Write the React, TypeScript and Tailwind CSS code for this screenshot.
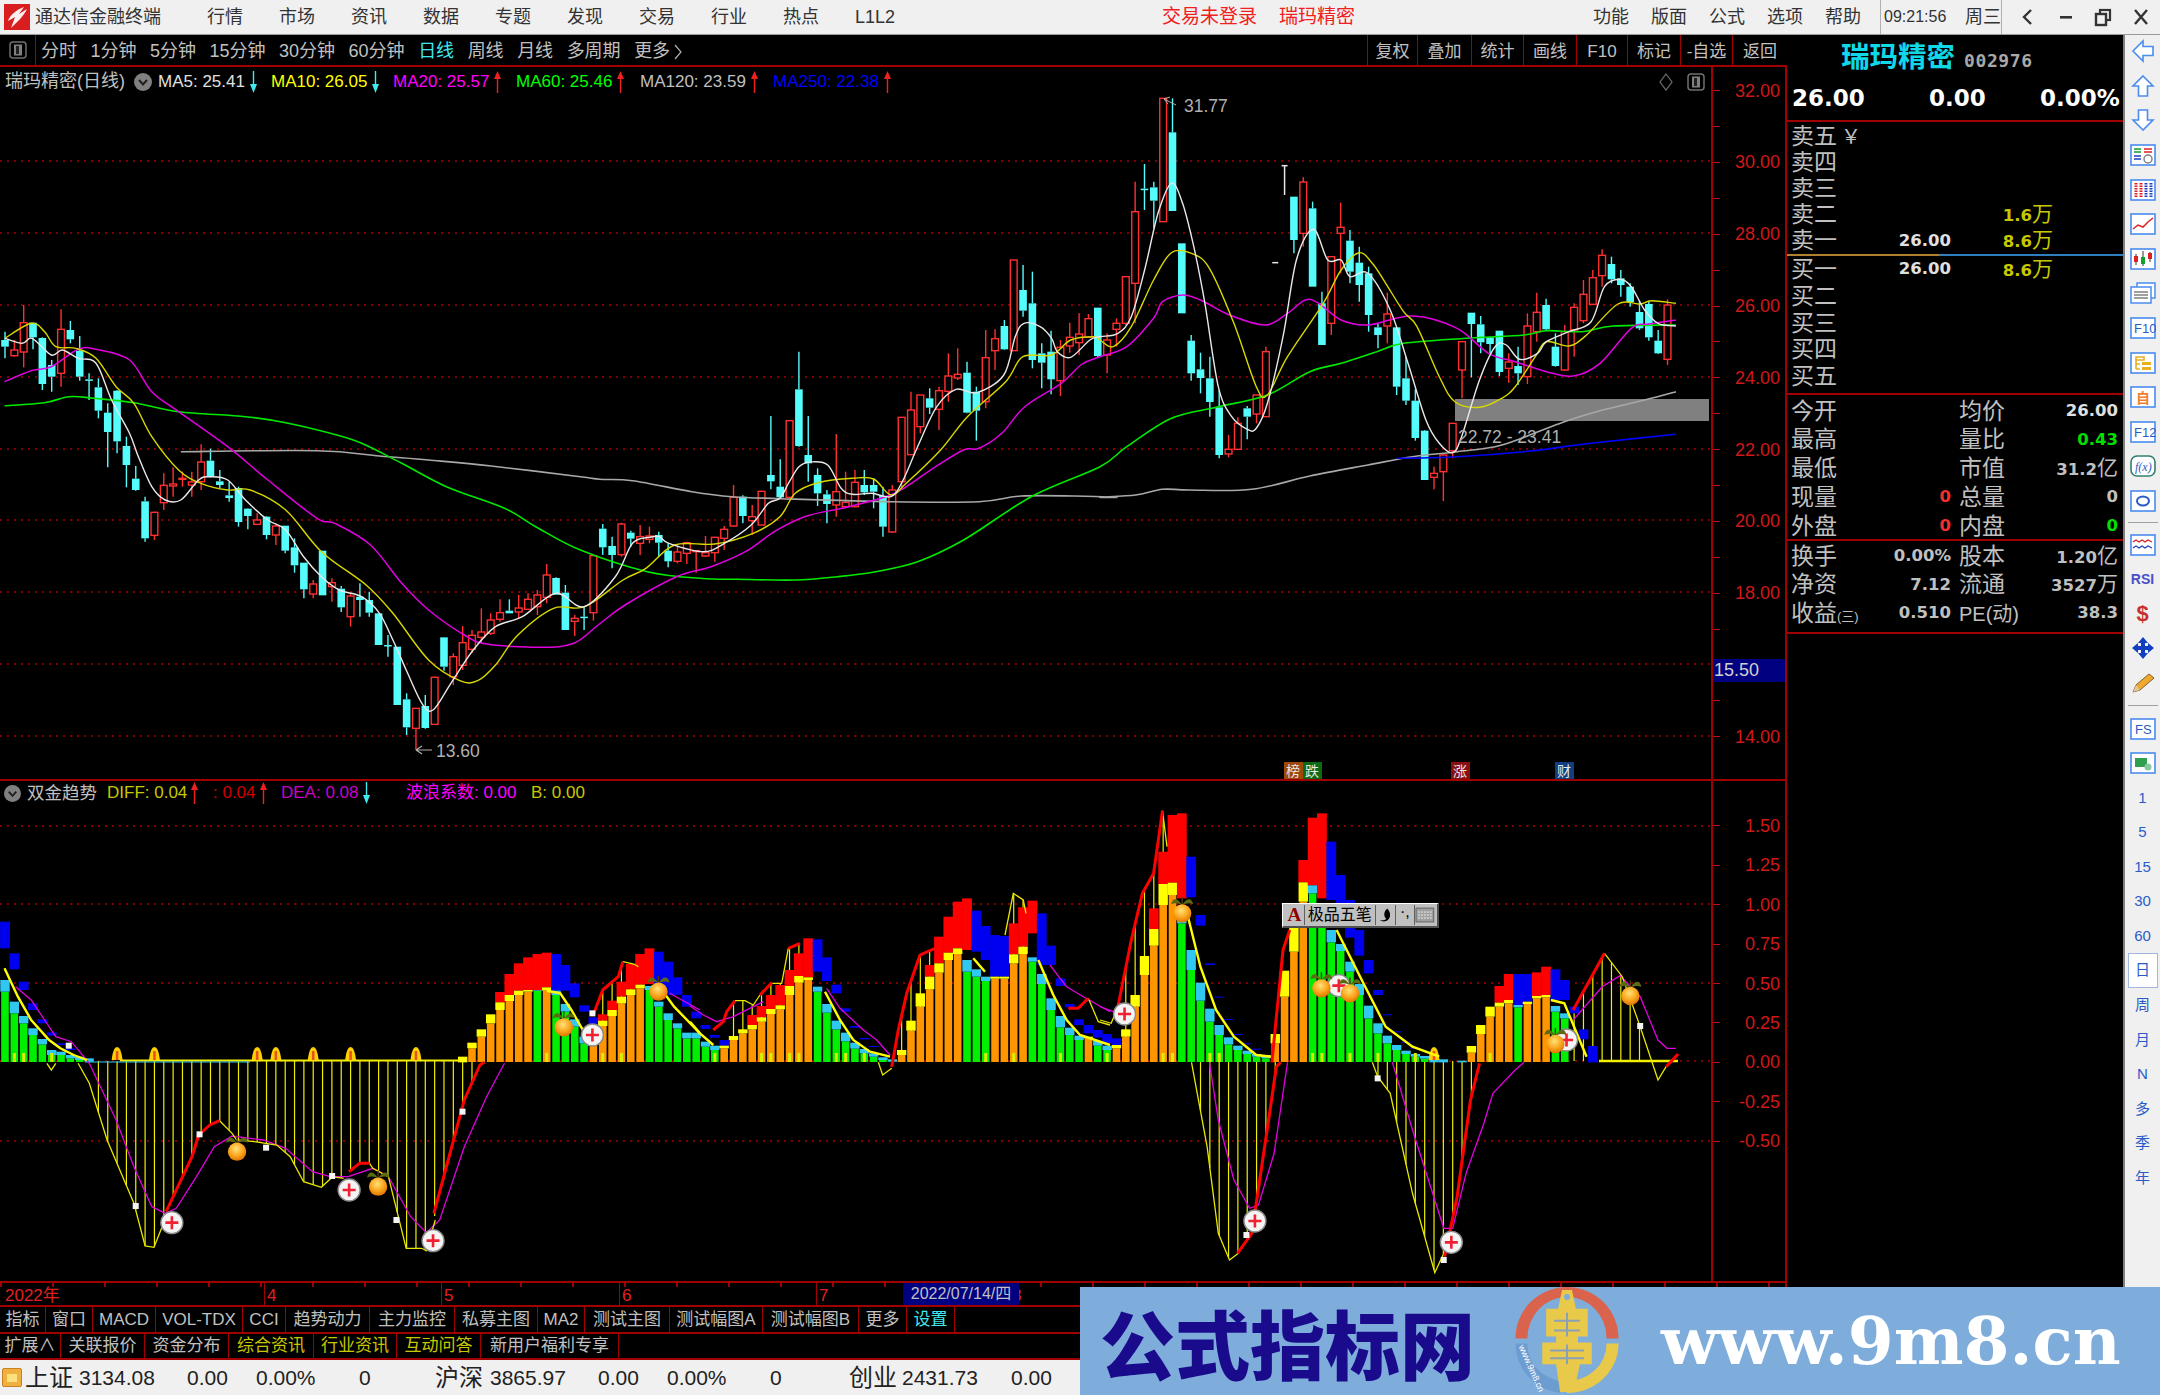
import React from "react";

type P = number[];
const z9 = (a: P[]) => a.map(([x, y]) => [x / 2.24, 260 + y / 3]);
const z11 = (a: P[]) => a.map(([x, y]) => [600 + x / 2.613, 260 + y / 3]);
const z8 = (a: P[]) => a.map(([x, y]) => [1100 + x / 2.24, 70 + y / 3]);
const z6 = (a: P[]) => a.map(([x, y]) => [x / 2.24, 780 + y / 3]);
const z7 = (a: P[]) => a.map(([x, y]) => [1100 + x / 2.24, 780 + y / 3]);
const z12 = (a: P[]) => a.map(([x, y]) => [690 + x / 3, 880 + y / 3]);
const cx = (i: number) => 5 + 9.34 * i;

const smooth = (pts: P[]) => {
  let d = `M${pts[0][0].toFixed(1)} ${pts[0][1].toFixed(1)}`;
  for (let i = 0; i < pts.length - 1; i++) {
    const p0 = pts[i - 1] || pts[i];
    const p1 = pts[i];
    const p2 = pts[i + 1];
    const p3 = pts[i + 2] || p2;
    const c1x = p1[0] + (p2[0] - p0[0]) / 6;
    const c1y = p1[1] + (p2[1] - p0[1]) / 6;
    const c2x = p2[0] - (p3[0] - p1[0]) / 6;
    const c2y = p2[1] - (p3[1] - p1[1]) / 6;
    d += `C${c1x.toFixed(1)} ${c1y.toFixed(1)} ${c2x.toFixed(1)} ${c2y.toFixed(1)} ${p2[0].toFixed(1)} ${p2[1].toFixed(1)}`;
  }
  return d;
};
const poly = (pts: P[]) => pts.map((p) => p.map((n) => n.toFixed(1)).join(",")).join(" ");
const yAt = (pts: P[], x: number) => {
  for (let i = 0; i < pts.length - 1; i++) {
    if (x >= pts[i][0] && x <= pts[i + 1][0]) {
      const t = (x - pts[i][0]) / (pts[i + 1][0] - pts[i][0] || 1);
      return pts[i][1] + t * (pts[i + 1][1] - pts[i][1]);
    }
  }
  return null;
};

// [red?, high, top, bottom, low]
const candlesA = [
  [0, 215, 240, 260, 295], [1, 240, 270, 287, 290], [1, 135, 188, 276, 322], [0, 188, 188, 232, 268], [0, 232, 234, 372, 390],
  [0, 300, 315, 350, 395], [1, 148, 208, 340, 380], [0, 183, 210, 238, 250], [0, 228, 272, 350, 362], [0, 340, 358, 360, 420],
  [0, 355, 382, 452, 475], [0, 430, 458, 516, 622], [0, 390, 392, 544, 580], [0, 530, 558, 615, 682], [0, 618, 656, 690, 692],
  [0, 710, 724, 835, 845], [1, 755, 757, 826, 840], [1, 640, 676, 728, 750], [1, 622, 672, 678, 710], [1, 635, 655, 658, 680],
  [1, 635, 666, 675, 710], [1, 553, 606, 665, 690], [0, 566, 602, 648, 652], [0, 630, 664, 675, 684], [0, 665, 706, 714, 725],
  [0, 680, 684, 786, 800], [0, 745, 746, 768, 808], [1, 760, 780, 793, 795], [0, 768, 770, 825, 838], [1, 793, 798, 825, 855],
  [0, 797, 797, 872, 880], [0, 835, 862, 916, 938], [0, 908, 908, 988, 1015], [1, 960, 972, 1002, 1015], [0, 872, 872, 1006, 1006],
  [1, 955, 968, 980, 1025], [0, 978, 986, 1042, 1056], [1, 1000, 1008, 1070, 1100], [0, 970, 1010, 1020, 1070], [0, 995, 1020, 1058, 1070],
  [0, 1060, 1060, 1155, 1155], [0, 1125, 1155, 1158, 1190], [0, 1160, 1160, 1335, 1335], [0, 1300, 1318, 1402, 1425], [1, 1345, 1345, 1405, 1470],
  [0, 1305, 1338, 1404, 1406], [1, 1250, 1252, 1393, 1393], [0, 1132, 1132, 1220, 1232], [1, 1180, 1190, 1250, 1275], [1, 1098, 1148, 1216, 1230],
  [1, 1110, 1126, 1168, 1180], [1, 1045, 1116, 1132, 1150], [1, 1060, 1080, 1120, 1125], [1, 1018, 1058, 1078, 1085], [0, 1018, 1052, 1060, 1060],
  [1, 1005, 1044, 1056, 1075], [1, 1000, 1018, 1048, 1050], [1, 990, 1005, 1040, 1065], [1, 912, 945, 1012, 1030], [0, 952, 954, 1004, 1004],
  [0, 975, 998, 1110, 1110], [1, 1065, 1075, 1084, 1128], [0, 1040, 1070, 1072, 1110], [1, 885, 887, 1058, 1082], [0, 792, 806, 862, 885],
  [0, 830, 858, 885, 925], [1, 788, 792, 884, 890], [0, 812, 818, 836, 860], [1, 795, 830, 850, 885], [1, 800, 828, 838, 850],
  [0, 815, 825, 848, 890], [0, 850, 872, 904, 922], [1, 855, 876, 904, 910], [1, 845, 848, 880, 912], [1, 870, 872, 875, 938],
  [1, 828, 878, 888, 890], [1, 830, 832, 878, 905], [1, 798, 808, 835, 870], [1, 675, 712, 798, 800], [0, 706, 710, 768, 790],
  [1, 735, 770, 782, 825], [1, 692, 694, 795, 795], [0, 468, 645, 664, 688], [0, 598, 680, 712, 715], [1, 482, 482, 712, 712],
  [0, 275, 388, 558, 560], [0, 468, 585, 610, 665], [0, 625, 645, 700, 738], [0, 690, 703, 732, 790], [1, 522, 695, 735, 770],
  [1, 635, 727, 740, 745], [1, 630, 667, 740, 742], [0, 630, 675, 697, 705], [0, 655, 675, 695, 745], [0, 680, 708, 800, 830],
  [1, 675, 690, 816, 818], [1, 472, 472, 665, 690], [1, 395, 450, 584, 585], [1, 405, 405, 500, 520], [0, 385, 415, 443, 462],
  [1, 380, 392, 448, 510], [1, 280, 348, 394, 425], [1, 265, 343, 354, 360], [0, 305, 338, 458, 460], [0, 380, 395, 452, 542],
  [1, 210, 293, 425, 445], [1, 208, 236, 272, 330], [0, 180, 198, 268, 270], [1, 0, 0, 272, 272], [0, 15, 90, 152, 170],
  [0, 35, 130, 300, 325], [0, 250, 280, 308, 385], [0, 212, 275, 358, 403], [1, 240, 262, 362, 408], [1, 188, 232, 258, 278],
  [1, 160, 222, 248, 285], [1, 162, 176, 232, 232], [0, 143, 143, 288, 292],
];
const candlesB = [
  [1, 790, 810, 855, 910], [1, 745, 760, 778, 830], [1, 620, 620, 760, 765], [1, 335, 425, 640, 760], [0, 282, 356, 360, 420],
  [0, 335, 352, 392, 475], [1, 85, 85, 455, 455], [0, 85, 187, 423, 423], [0, 520, 520, 730, 730], [0, 795, 812, 910, 932],
  [0, 848, 898, 924, 970], [0, 860, 925, 996, 1040], [0, 960, 1012, 1155, 1165], [1, 1095, 1138, 1152, 1162], [1, 1042, 1060, 1138, 1138],
  [0, 1008, 1015, 1040, 1108], [1, 975, 975, 1032, 1060], [1, 830, 845, 1040, 1040], [2, 578, 578, 578, 578], [3, 287, 287, 375, 375],
  [0, 380, 380, 510, 550], [1, 322, 336, 490, 530], [0, 395, 415, 650, 650], [0, 665, 700, 825, 825], [1, 560, 560, 760, 795],
  [1, 398, 472, 490, 610], [0, 480, 512, 605, 640], [0, 530, 578, 645, 695], [0, 590, 610, 735, 785], [0, 760, 772, 795, 835],
  [1, 668, 732, 768, 820], [0, 770, 772, 950, 975], [0, 860, 925, 992, 1005], [0, 958, 992, 1104, 1112], [0, 1080, 1082, 1230, 1230],
  [1, 1190, 1210, 1222, 1258], [1, 1150, 1155, 1205, 1293], [1, 1060, 1060, 1142, 1165], [1, 815, 815, 900, 985], [0, 728, 728, 762, 922],
  [0, 738, 763, 817, 850], [0, 800, 802, 822, 850], [0, 782, 782, 906, 918], [1, 850, 876, 895, 938], [0, 830, 888, 910, 945],
  [1, 730, 768, 920, 942], [1, 668, 727, 785, 815], [0, 686, 705, 778, 780], [0, 790, 830, 888, 890], [1, 765, 785, 900, 902],
  [1, 700, 712, 780, 860], [1, 630, 673, 752, 760], [1, 600, 623, 703, 705], [1, 538, 556, 617, 650], [0, 560, 582, 628, 640],
  [0, 600, 625, 645, 680], [0, 640, 650, 696, 710], [0, 692, 726, 775, 780], [0, 692, 702, 802, 812], [0, 780, 812, 850, 852],
  [1, 688, 705, 868, 885],
];
const candles = [
  ...candlesA.map(([k, a, b, c, d]) => [k, 260 + a / 3, 260 + b / 3, 260 + c / 3, 260 + d / 3]),
  ...candlesB.map(([k, a, b, c, d]) => [k, 70 + a / 3, 70 + b / 3, 70 + c / 3, 70 + d / 3]),
];

const ma5 = [
  ...z9([[11, 235], [50, 250], [72, 235], [115, 285], [140, 270], [175, 295], [215, 310], [250, 420], [290, 520], [310, 590], [340, 680], [370, 720], [405, 720], [445, 660], [470, 650], [510, 660], [550, 720], [600, 780], [640, 810], [680, 890], [720, 950], [760, 990], [810, 1010], [850, 1060], [880, 1140], [910, 1230], [945, 1330], [970, 1350], [1010, 1270], [1060, 1170], [1110, 1100], [1170, 1070], [1245, 1000], [1308, 1040]]),
  ...z11([[40, 950], [85, 850], [130, 832], [155, 830], [180, 850], [270, 875], [325, 850], [395, 795], [440, 730], [470, 715], [495, 665], [520, 620], [550, 606], [595, 615], [630, 685], [660, 703], [710, 700], [760, 710], [790, 665], [830, 560], [880, 440], [930, 388], [985, 398], [1055, 345], [1085, 230], [1108, 190], [1150, 200], [1180, 235], [1195, 275], [1230, 292], [1280, 240]]),
  ...z8([[0, 800], [40, 790], [70, 740], [100, 600], [130, 430], [160, 340], [185, 400], [210, 530], [235, 700], [265, 950], [295, 1040], [330, 1078], [350, 1075], [375, 1000], [410, 800], [440, 570], [478, 478], [510, 570], [540, 570], [560, 620], [600, 610], [650, 720], [690, 880], [730, 1050], [760, 1120], [790, 1148], [810, 1100], [850, 930], [885, 830], [910, 825], [940, 868], [980, 850], [1000, 815], [1050, 785], [1100, 755], [1130, 650], [1165, 628], [1190, 650], [1220, 720], [1250, 760], [1290, 768]]),
];
const ma10 = [
  ...z9([[11, 235], [70, 190], [100, 215], [125, 260], [170, 265], [215, 295], [260, 380], [300, 430], [340, 530], [400, 630], [450, 670], [510, 690], [560, 690], [640, 750], [720, 875], [820, 975], [880, 1060], [960, 1200], [1030, 1262], [1070, 1262], [1110, 1215], [1160, 1125], [1240, 1045], [1310, 1040]]),
  ...z11([[60, 960], [120, 925], [195, 855], [300, 852], [400, 820], [470, 770], [510, 700], [570, 668], [660, 655], [715, 657], [760, 705], [800, 670], [890, 570], [960, 470], [1060, 365], [1105, 290], [1180, 285], [1230, 240], [1290, 230]]),
  ...z8([[0, 810], [30, 830], [70, 770], [120, 630], [160, 548], [205, 550], [245, 595], [300, 760], [350, 950], [375, 975], [420, 860], [500, 700], [540, 600], [580, 548], [610, 580], [640, 640], [680, 725], [710, 770], [760, 920], [795, 995], [850, 1012], [900, 985], [930, 950], [975, 860], [1000, 815], [1050, 828], [1090, 795], [1160, 702], [1210, 702], [1235, 692], [1290, 700]]),
];
const ma20 = [
  ...z9([[10, 365], [70, 332], [115, 320], [175, 268], [215, 268], [290, 300], [340, 395], [400, 455], [510, 560], [600, 660], [710, 775], [750, 790], [830, 855], [900, 970], [960, 1050], [1040, 1125], [1090, 1152], [1210, 1162], [1285, 1150], [1340, 1095], [1400, 1035]]),
  ...z11([[200, 950], [290, 920], [380, 875], [460, 812], [540, 768], [650, 740], [770, 700], [870, 625], [950, 570], [990, 565], [1050, 520], [1110, 440], [1205, 370], [1260, 312]]),
  ...z8([[0, 860], [60, 830], [120, 745], [140, 695], [185, 675], [225, 690], [290, 735], [370, 765], [420, 730], [460, 690], [490, 700], [540, 750], [600, 765], [700, 738], [800, 775], [870, 850], [930, 875], [1000, 905], [1060, 918], [1120, 880], [1190, 775], [1230, 762], [1290, 750]]),
];
const ma60 = [
  ...z9([[10, 437], [100, 428], [155, 410], [210, 415], [300, 428], [400, 455], [550, 470], [640, 488], [740, 520], [810, 550], [900, 610], [1000, 680], [1130, 745], [1200, 800], [1300, 870], [1450, 935], [1568, 955]]),
  ...z11([[360, 958], [510, 960], [620, 950], [720, 935], [830, 905], [950, 840], [1130, 708]]),
  ...z8([[0, 1190], [60, 1130], [160, 1045], [260, 1012], [375, 975], [470, 905], [540, 880], [620, 845], [680, 820], [820, 805], [950, 795], [1000, 782], [1080, 785], [1150, 768], [1290, 765]]),
];
const ma120 = [
  ...z9([[405, 575], [710, 572], [850, 588], [960, 600], [1100, 618], [1300, 650]]),
  ...z11([[0, 658], [85, 662], [240, 695], [345, 710], [470, 716], [760, 725], [990, 725], [1100, 708], [1240, 708], [1350, 712]]),
  ...z8([[0, 1282], [80, 1275], [140, 1258], [200, 1260], [340, 1258], [470, 1218], [600, 1185], [700, 1160], [800, 1145], [900, 1125], [1040, 1055], [1120, 1022], [1220, 990], [1290, 965]]),
];
const ma250 = z8([[665, 1165], [800, 1160], [950, 1145], [1100, 1120], [1290, 1093]]);

// [index, kind, barTop, capTop, upperTop, upperBottom, upperColor], y in zoomed units
type Bar = [number, string, number, number, number?, number?, string?];
const barsA: Bar[] = [
  [0, "g", 635, 600, 425, 505, "b"], [1, "g", 700, 665, 520, 568, "b"], [2, "g", 730, 708, 605, 630, "b"], [3, "g", 765, 745, 670, 690, "b"],
  [4, "g", 793, 777, 718, 730, "b"], [5, "g", 825, 810, 757, 767, "b"], [6, "g", 825, 815, 790, 795, "b"], [7, "g", 835, 825, 805, 810, "b"],
  [8, "g", 840, 830], [9, "g", 845, 835], [49, "o", 847, 830], [50, "o", 805, 788], [51, "o", 770, 748], [52, "o", 730, 703],
  [53, "o", 690, 667, 636, 667, "r"], [54, "o", 663, 645, 582, 645, "r"], [55, "o", 645, 632, 550, 632, "r"], [56, "o", 635, 630, 532, 630, "r"],
  [57, "g", 632, 630, 522, 630, "r"], [58, "o", 632, 622, 518, 622, "r"], [59, "g", 645, 632, 522, 632, "b"], [60, "g", 695, 672, 555, 632, "b"],
  [61, "g", 740, 718, 610, 652, "b"], [62, "g", 790, 770, 676, 695, "b"], [63, "o", 770, 750, 712, 735, "b"], [64, "o", 738, 722, 703, 722, "r"],
  [65, "o", 708, 690, 662, 690, "r"], [66, "o", 670, 650, 605, 650, "r"], [67, "o", 645, 628, 552, 628, "r"], [68, "o", 625, 614, 522, 614, "r"],
  [69, "g", 630, 618, 505, 612, "r"], [70, "g", 680, 665, 515, 625, "b"], [71, "g", 720, 700, 545, 645, "b"], [72, "g", 745, 730, 592, 645, "b"],
  [73, "g", 775, 758, 645, 680, "b"],
];
const barsB: Bar[] = [
  [74, "g", 475, 458, 395, 415, "b"], [75, "g", 500, 485, 435, 447, "b"], [76, "g", 510, 497, 465, 473, "b"], [77, "o", 505, 497, 480, 497, "b"],
  [78, "o", 480, 468], [79, "o", 460, 448], [80, "o", 448, 435, 405, 435, "r"], [81, "o", 425, 412, 378, 412, "r"], [82, "o", 402, 387, 345, 387, "r"],
  [83, "o", 388, 376, 315, 376, "r"], [84, "o", 345, 318, 270, 318, "r"], [85, "o", 308, 288, 220, 288, "r"], [86, "o", 300, 292, 175, 292, "r"],
  [87, "g", 335, 320, 178, 275, "b"], [88, "g", 398, 372, 232, 303, "b"], [89, "g", 448, 422, 314, 340, "b"], [90, "g", 484, 458, 385, 395, "b"],
  [91, "g", 506, 488, 438, 443, "b"], [92, "g", 520, 507, 474, 478, "b"], [93, "g", 530, 520, 498, 501, "b"], [94, "g", 540, 532], [95, "g", 545, 538],
  [96, "o", 525, 510], [97, "o", 452, 422], [98, "o", 380, 340], [99, "o", 328, 290, 255, 290, "r"], [100, "o", 278, 250, 170, 250, "r"],
  [101, "o", 240, 218, 110, 218, "r"], [102, "o", 222, 205, 65, 205, "r"], [103, "g", 275, 240, 55, 210, "r"], [104, "g", 290, 268, 92, 215, "b"],
  [105, "g", 303, 290, 138, 240, "b"], [106, "o", 296, 290, 165, 290, "b"], [107, "o", 296, 290, 168, 290, "b"], [108, "o", 250, 223, 130, 223, "r"],
  [109, "o", 222, 200, 82, 200, "r"], [110, "g", 245, 232, 62, 160, "r"], [111, "g", 312, 282, 100, 255, "b"], [112, "g", 390, 355, 197, 255, "b"],
  [113, "g", 442, 408, 295, 318, "b"], [114, "g", 465, 443, 372, 382, "b"], [115, "g", 480, 467, 418, 435, "b"], [116, "o", 475, 470, 435, 460, "b"],
  [117, "g", 497, 483, 450, 473, "b"],
];
const barsC: Bar[] = [
  [118, "g", 810, 797, 762, 790, "b"], [119, "o", 805, 795, 775, 795, "b"], [120, "o", 770, 748], [121, "o", 680, 645], [122, "o", 585, 528],
  [123, "o", 497, 447, 385, 447, "r"], [124, "o", 375, 312, 215, 312, "r"], [125, "o", 345, 308, 105, 308, "r"], [126, "g", 430, 422, 100, 355, "r"],
  [127, "g", 570, 510, 230, 352, "b"], [128, "g", 662, 608, 405, 437, "b"], [129, "g", 725, 686, 550, 555, "b"], [130, "g", 765, 735, 650, 653, "b"],
  [131, "g", 793, 772, 717, 720, "b"], [132, "g", 810, 797, 762, 765, "b"], [133, "g", 822, 812, 790, 793, "b"], [134, "g", 830, 822, 806, 809, "b"],
  [135, "g", 835, 825], [136, "o", 790, 762], [137, "o", 650, 572], [138, "o", 515, 440], [139, "o", 365, 307, 240, 307, "r"], [140, "g", 340, 316, 113, 316, "r"],
  [141, "g", 420, 400, 100, 355, "r"], [142, "g", 487, 450, 185, 360, "b"], [143, "g", 513, 492, 285, 372, "b"], [144, "g", 575, 545, 360, 473, "b"],
  [145, "g", 645, 612, 450, 527, "b"], [146, "g", 715, 677, 540, 580, "b"], [147, "g", 760, 730, 630, 645, "b"], [148, "g", 790, 767, 703, 706, "b"],
  [149, "g", 810, 795, 754, 757, "b"], [150, "g", 822, 812, 785, 788, "b"], [151, "g", 830, 822, 803, 806, "b"], [152, "g", 836, 828], [153, "g", 847, 835],
  [154, "g", 847, 838], [156, "g", 847, 842], [157, "o", 818, 798], [158, "o", 762, 735], [159, "o", 710, 680], [160, "o", 680, 668, 618, 668, "r"],
  [161, "o", 670, 660, 582, 660, "r"], [162, "g", 682, 675, 582, 675, "b"], [163, "o", 672, 665, 582, 665, "b"], [164, "o", 655, 648, 577, 648, "r"],
  [165, "o", 652, 645, 560, 645, "r"], [166, "g", 695, 678, 568, 660, "b"], [167, "g", 715, 700, 600, 660, "b"], [168, "g", 847, 847, 680, 700, "b"],
  [169, "g", 847, 847, 748, 778, "b"], [170, "g", 847, 847, 798, 847, "b"],
];
const bars = [
  ...barsA.map((b) => [b, 780] as const),
  ...barsB.map((b) => [b, 880] as const),
  ...barsC.map((b) => [b, 780] as const),
];
// bars with a light foot at the zero line
const feet = [1, 2, 5, 58, 64, 66, 76, 81, 82, 84, 85, 89, 90, 92, 105, 108, 113, 118, 124, 125, 129, 130, 140, 141, 144, 147, 151, 159];

const thinPaths: P[][] = [
  z6([[105, 850], [115, 870], [125, 850]]),
  z6([[175, 850], [200, 910], [240, 1080], [300, 1270], [325, 1398], [345, 1402], [372, 1310]]),
  z6([[492, 1022], [520, 1060], [530, 1080], [570, 1085], [620, 1095], [650, 1130], [680, 1205], [720, 1222], [745, 1190], [770, 1195]]),
  z6([[828, 1150], [835, 1165], [870, 1190], [910, 1405], [945, 1405], [955, 1412], [975, 1320]]),
  z6([[1395, 545], [1420, 552], [1430, 560]]),
  z7([[0, 720], [25, 730], [40, 680]]),
  z7([[140, 92], [150, 200]]),
  z7([[205, 847], [240, 1100], [265, 1360], [290, 1440], [310, 1420]]),
  z7([[610, 847], [622, 890], [650, 940], [700, 1240], [750, 1478], [770, 1420]]),
  z7([[1130, 520], [1170, 590], [1210, 740], [1250, 900], [1268, 860]]),
  z12([[135, 362], [165, 362], [190, 375], [210, 345]]),
  z12([[245, 310], [275, 310], [295, 205]]),
  z12([[565, 547], [578, 585], [605, 565]]),
  z12([[945, 165], [970, 40], [1000, 60], [1008, 100]]),
  z12([[1195, 355], [1225, 425], [1260, 435]]),
];
const thickRed: P[][] = [
  z6([[372, 1295], [430, 1130], [445, 1065], [470, 1035], [492, 1022]]),
  z6([[782, 1175], [805, 1150], [828, 1150]]),
  z6([[972, 1300], [1040, 960], [1075, 855], [1085, 847]]),
  z6([[1330, 700], [1350, 630], [1385, 590], [1395, 545]]),
  z12([[70, 450], [100, 425], [110, 395], [135, 362]]),
  z12([[210, 345], [245, 308]]),
  z12([[295, 205], [330, 190]]),
  z12([[605, 560], [625, 450], [650, 340], [690, 225], [735, 205]]),
  z12([[1135, 385], [1165, 385], [1195, 355]]),
  z7([[40, 680], [70, 480], [95, 340], [120, 280], [140, 92]]),
  z7([[308, 1420], [340, 1360], [380, 1000], [395, 860], [405, 847]]),
  z7([[385, 847], [410, 510], [425, 450]]),
  z7([[772, 1430], [800, 1250], [830, 960], [850, 850]]),
  z7([[1060, 690], [1130, 520]]),
  z7([[1268, 860], [1295, 822]]),
];
const thickYellow: P[][] = [
  z6([[10, 565], [40, 650], [70, 720], [110, 780], [135, 805], [165, 825], [195, 840]]),
  z6([[1225, 632], [1255, 640], [1280, 690], [1310, 760]]),
  z6([[1480, 625], [1510, 680], [1568, 760]]),
  z12([[0, 425], [30, 460], [70, 495]]),
  z12([[405, 335], [450, 420], [490, 480], [540, 515], [600, 530]]),
  z12([[850, 235], [885, 275]]),
  z12([[1045, 240], [1090, 345], [1130, 420], [1170, 465], [1260, 495]]),
  z7([[195, 400], [225, 560], [260, 690], [300, 770], [350, 825], [385, 830]]),
  z7([[530, 450], [590, 610], [640, 740], [700, 800], [760, 830]]),
  z7([[1010, 660], [1040, 670], [1090, 830]]),
];
const magenta: P[][] = [
  z6([[35, 620], [70, 660], [100, 720], [125, 770], [160, 785], [200, 850], [260, 1020], [300, 1160], [340, 1280], [370, 1300], [395, 1285], [440, 1190], [480, 1100], [520, 1068], [590, 1080], [640, 1105], [700, 1175], [740, 1190], [780, 1190], [835, 1165], [870, 1190], [920, 1310], [955, 1358], [985, 1320], [1040, 1100], [1090, 950], [1130, 850]]),
  z6([[1500, 640], [1568, 690]]),
  z12([[0, 378], [40, 405], [80, 425], [130, 410], [220, 365]]),
  z12([[410, 325], [450, 385], [520, 450], [560, 480], [600, 525]]),
  z12([[1080, 255], [1110, 295], [1130, 320], [1180, 350], [1260, 395]]),
  z7([[0, 680], [40, 700]]),
  z7([[245, 847], [265, 1020], [300, 1200], [335, 1285], [355, 1275], [390, 1120], [420, 847]]),
  z7([[655, 847], [700, 1050], [770, 1345], [790, 1345], [820, 1180], [860, 1030], [880, 940], [930, 870], [950, 847]]),
  z7([[1060, 720], [1125, 620], [1165, 587], [1210, 650], [1250, 780], [1270, 805], [1290, 805]]),
];

// thin columns: [from index, to index, curve they run to]
const stems: [number, number, P[]][] = [
  [10, 50, z6([[175, 850], [200, 910], [240, 1080], [300, 1270], [325, 1398], [345, 1402], [372, 1300], [430, 1130], [445, 1065], [470, 1035], [492, 1022], [520, 1060], [530, 1080], [570, 1085], [620, 1095], [650, 1130], [680, 1205], [720, 1222], [745, 1190], [770, 1195], [782, 1175], [805, 1150], [828, 1150], [835, 1165], [870, 1190], [910, 1405], [945, 1405], [955, 1412], [975, 1300], [1040, 960], [1075, 855]])],
  [128, 137, z7([[205, 847], [240, 1100], [265, 1360], [290, 1440], [310, 1420], [340, 1360], [380, 1000], [395, 860]])],
  [147, 157, z7([[610, 847], [622, 890], [650, 940], [700, 1240], [750, 1478], [770, 1420], [800, 1250], [830, 960], [850, 850]])],
  [168, 175, z7([[1060, 690], [1130, 520], [1170, 590], [1210, 740], [1240, 847]])],
  [63, 68, z6([[1330, 700], [1350, 630], [1385, 590], [1395, 545], [1430, 560]])],
  [78, 86, z12([[70, 450], [110, 395], [135, 362], [165, 362], [190, 375], [210, 345], [245, 308], [275, 310], [295, 205], [335, 190]])],
  [96, 100, z12([[605, 560], [625, 450], [650, 340], [690, 225], [735, 205]])],
  [107, 109, z12([[945, 165], [970, 40], [1000, 60], [1008, 100]])],
  [119, 125, z7([[40, 680], [70, 480], [95, 340], [120, 280], [140, 92], [150, 200]])],
];

const pluses = [...z6([[385, 1328], [782, 1230], [970, 1382], [1327, 765]]), ...z7([[55, 702], [347, 1323], [787, 1387], [535, 617], [1045, 780]])];
const apricots = [...z6([[531, 1115], [847, 1220], [1263, 742], [1475, 635]]), ...z7([[184, 400], [496, 625], [560, 640], [1020, 792], [1188, 648]])];
const squares = [...z6([[304, 1278], [447, 1063], [596, 1103], [744, 1188], [888, 1320], [1036, 995], [1327, 700], [154, 797]]), ...z7([[622, 895], [1210, 738], [770, 1440], [328, 1365]])];

const Grid = ({ ys, end = 1711 }: { ys: number[]; end?: number }) => (
  <>
    {ys.map((y) => (
      <line key={y} x1="0" x2={end} y1={y} y2={y} stroke="#a80000" strokeWidth="1.3" strokeDasharray="2 5" />
    ))}
  </>
);

const PriceChart = () => (
  <svg viewBox="0 96 1711 685" className="w-[1711px] h-[685px] block">
    <Grid ys={[161, 233, 305, 377, 449, 520, 592, 664, 736]} />
    <rect x="1455" y="399" width="254" height="22" fill="#808080" />
    {candles.map(([k, hi, top, bot, lo], i) => {
      const x = cx(i);
      if (k === 2) return <line key={i} x1={x - 3} x2={x + 3} y1={top} y2={top} stroke="#e8e8e8" strokeWidth="1.5" />;
      if (k === 3)
        return (
          <g key={i} stroke="#e8e8e8" strokeWidth="1.5">
            <line x1={x} x2={x} y1={top} y2={bot} />
            <line x1={x - 3} x2={x + 3} y1={top} y2={top} />
          </g>
        );
      const c = k === 1 ? "#ff3030" : "#54fcfc";
      return (
        <g key={i}>
          <line x1={x} x2={x} y1={hi} y2={top} stroke={c} strokeWidth="1.4" />
          <line x1={x} x2={x} y1={bot} y2={lo} stroke={c} strokeWidth="1.4" />
          {k === 1 ? (
            <rect x={x - 3.4} y={top} width="6.8" height={Math.max(bot - top, 1)} fill="#000" stroke={c} strokeWidth="1.4" />
          ) : (
            <rect x={x - 3.8} y={top} width="7.6" height={Math.max(bot - top, 1.5)} fill={c} />
          )}
        </g>
      );
    })}
    <path d={smooth(ma120)} fill="none" stroke="#a8a8a8" strokeWidth="1.6" />
    <path d={smooth(ma250)} fill="none" stroke="#0000ff" strokeWidth="1.6" />
    <path d={smooth(ma60)} fill="none" stroke="#00e800" strokeWidth="1.6" />
    <path d={smooth(ma20)} fill="none" stroke="#e000e0" strokeWidth="1.5" />
    <path d={smooth(ma10)} fill="none" stroke="#d8d800" strokeWidth="1.4" />
    <path d={smooth(ma5)} fill="none" stroke="#e8e8e8" strokeWidth="1.4" />
    <g fill="#b0b0b0" fontSize="17.5" fontFamily="'Liberation Sans',sans-serif">
      <path d="M1164 99 L1176 105 M1164 99 L1170 97 M1164 99 L1168 104" stroke="#b0b0b0" strokeWidth="1" fill="none" />
      <text x="1184" y="112">31.77</text>
      <path d="M416 750 L432 750 M416 750 L422 746 M416 750 L422 754" stroke="#b0b0b0" strokeWidth="1.2" fill="none" />
      <text x="436" y="757">13.60</text>
      <text x="1458" y="443">22.72 - 23.41</text>
    </g>
    <g fontSize="14" fontFamily="'Noto Sans CJK SC',sans-serif" fill="#e8e8e8">
      <rect x="1284" y="762" width="19" height="17" fill="#a04808" />
      <text x="1286" y="776">榜</text>
      <rect x="1303" y="762" width="19" height="17" fill="#0c6a14" />
      <text x="1305" y="776">跌</text>
      <rect x="1451" y="762" width="19" height="17" fill="#8a1010" />
      <text x="1453" y="776">涨</text>
      <rect x="1555" y="762" width="19" height="17" fill="#0f3f80" />
      <text x="1557" y="776">财</text>
    </g>
  </svg>
);

const Plus = ({ x, y }: { x: number; y: number }) => (
  <g>
    <circle cx={x} cy={y} r="11" fill="#f4f4f4" stroke="#8a8a8a" strokeWidth="1.4" />
    <path d={`M${x - 6.5} ${y}H${x + 6.5}M${x} ${y - 6.5}V${y + 6.5}`} stroke="#f02030" strokeWidth="2.6" />
  </g>
);

const Apricot = ({ x, y }: { x: number; y: number }) => (
  <g>
    <path d={`M${x} ${y - 8} C${x - 5} ${y - 17} ${x - 10} ${y - 15} ${x - 11} ${y - 9} C${x - 7} ${y - 11} ${x - 3} ${y - 10} ${x} ${y - 8} C${x + 3} ${y - 10} ${x + 7} ${y - 11} ${x + 11} ${y - 9} C${x + 10} ${y - 15} ${x + 5} ${y - 17} ${x} ${y - 8}Z`} fill="#5c6a12" />
    <path d={`M${x} ${y - 8}V${y - 16}`} stroke="#4a3a10" strokeWidth="1.4" />
    <circle cx={x} cy={y} r="9.2" fill="url(#apricot)" />
  </g>
);

const IndicatorChart = () => (
  <svg viewBox="0 805 1711 478" className="w-[1711px] h-[478px] block">
    <defs>
      <radialGradient id="apricot" cx="0.45" cy="0.35" r="0.7">
        <stop offset="0" stopColor="#ffe27a" />
        <stop offset="0.55" stopColor="#fba51c" />
        <stop offset="1" stopColor="#d86a00" />
      </radialGradient>
    </defs>
    <Grid ys={[826, 904, 983, 1061, 1141]} />
    {stems.map(([a, b, curve], n) =>
      Array.from({ length: b - a + 1 }, (_, k) => {
        const x = cx(a + k);
        const y = yAt(curve, x);
        if (y === null) return null;
        return <line key={`${n}-${k}`} x1={x} x2={x} y1="1061" y2={y} stroke="#f0f000" strokeWidth="1.2" />;
      })
    )}
    {bars.map(([[i, kind, top, cap, uTop, uBot, uCol], off]) => {
      const x = cx(i);
      const Y = (v: number) => off + v / 3;
      return (
        <g key={i}>
          {uTop !== undefined && <rect x={x - 4.9} y={Y(uTop)} width="9.8" height={(uBot! - uTop) / 3} fill={uCol === "r" ? "#ff0000" : "#0000f0"} />}
          <rect x={x - 3.8} y={Y(top)} width="7.6" height={1062 - Y(top)} fill={kind === "g" ? "#00ee00" : "#ff9600"} />
          <rect x={x - 4.7} y={Y(cap)} width="9.4" height={(top - cap) / 3} fill={kind === "g" ? "#30c8f0" : "#ffff00"} />
          {feet.includes(i) && <rect x={x - 1.5} y="1053" width="3" height="9" fill="#d8f000" />}
        </g>
      );
    })}
    <line x1="120" x2="460" y1="1060.5" y2="1060.5" stroke="#f0f000" strokeWidth="2" />
    <line x1="85" x2="250" y1="1062" y2="1062" stroke="#30c8f0" strokeWidth="1.2" />
    <line x1="1599" x2="1678" y1="1061" y2="1061" stroke="#f0f000" strokeWidth="2.5" />
    {[12, 16, 27, 29, 33, 37, 44, 153].map((i) => {
      const x = cx(i);
      return (
        <g key={i}>
          <path d={`M${x - 5.5} 1060Q${x - 4} 1047 ${x} 1047Q${x + 4} 1047 ${x + 5.5} 1060Z`} fill="#ffd000" />
          <rect x={x - 1.3} y="1051" width="2.6" height="9" fill="#e85020" />
        </g>
      );
    })}
    {magenta.map((p, i) => (
      <polyline key={i} points={poly(p)} fill="none" stroke="#e000e0" strokeWidth="1.3" />
    ))}
    {thinPaths.map((p, i) => (
      <polyline key={i} points={poly(p)} fill="none" stroke="#e8e800" strokeWidth="1.3" />
    ))}
    {thickYellow.map((p, i) => (
      <polyline key={i} points={poly(p)} fill="none" stroke="#ffff00" strokeWidth="2.4" />
    ))}
    {thickRed.map((p, i) => (
      <polyline key={i} points={poly(p)} fill="none" stroke="#ff0000" strokeWidth="3" strokeLinejoin="round" />
    ))}
    {squares.map(([x, y], i) => (
      <rect key={i} x={x - 3} y={y - 3} width="6" height="6" fill="#f4f4f4" />
    ))}
    {pluses.map(([x, y], i) => (
      <Plus key={i} x={x} y={y} />
    ))}
    {apricots.map(([x, y], i) => (
      <Apricot key={i} x={x} y={y} />
    ))}
  </svg>
);

const UpDown = ({ up }: { up?: boolean }) => (
  <svg width="9" height="22" viewBox="0 0 9 22" className="shrink-0">
    {up ? <path d="M4.5 0L8 8H5.2V22H3.8V8H1Z" fill="#f02020" /> : <path d="M4.5 22L1 13H3.8V0H5.2V13H8Z" fill="#40e8f0" />}
  </svg>
);

const Chevron = ({ size = 18 }: { size?: number }) => (
  <svg width={size} height={size} viewBox="0 0 18 18" className="shrink-0">
    <circle cx="9" cy="9" r="9" fill="#808080" />
    <path d="M5 7L9 11.5L13 7" fill="none" stroke="#202020" strokeWidth="2" />
  </svg>
);

const Restore = () => (
  <svg width="18" height="18" viewBox="0 0 18 18" className="shrink-0">
    <rect x="1" y="1" width="16" height="16" rx="3" fill="none" stroke="#707070" strokeWidth="1.5" />
    <rect x="5" y="3.5" width="8" height="11" fill="#808080" />
    <rect x="7" y="5" width="3" height="8" fill="#202020" />
  </svg>
);

const blue = "#4a8cf0";
const Arrow = ({ r }: { r: number }) => (
  <svg width="26" height="26" viewBox="0 0 26 26" className="shrink-0">
    <path d="M13 3L23 13H17.5V23H8.5V13H3Z" fill="#fff" stroke={blue} strokeWidth="1.6" transform={`rotate(${r} 13 13)`} />
  </svg>
);
const Box = ({ children }: { children?: React.ReactNode }) => (
  <svg width="26" height="22" viewBox="0 0 26 22" className="shrink-0">
    <rect x="1" y="1" width="24" height="20" fill="#fff" stroke={blue} strokeWidth="1.6" />
    {children}
  </svg>
);

const sideNums = ["1", "5", "15", "30", "60", "日", "周", "月", "N", "多", "季", "年"];

const Slot = ({ children }: { children: React.ReactNode }) => (
  <div className="h-[34.6px] w-[34px] flex items-center justify-center">{children}</div>
);

const SideBar = () => (
  <div className="w-[37px] h-full bg-[#f0f0f0] border-l-2 border-l-[#808080] flex flex-col items-center text-[15px] text-[#2a5cc8] font-['Liberation_Sans','Noto_Sans_CJK_SC',sans-serif]">
    <div className="flex flex-col items-center -mt-px">
      <Slot><Arrow r={-90} /></Slot>
      <Slot><Arrow r={0} /></Slot>
      <Slot><Arrow r={180} /></Slot>
      <Slot><Box>
        <path d="M4 5h7M4 8h7" stroke="#10a030" strokeWidth="1.5" /><path d="M14 5h8M14 8h8" stroke="#e02020" strokeWidth="1.5" /><path d="M4 12h7M4 15h7" stroke="#2040c0" strokeWidth="1.5" /><circle cx="18" cy="15" r="4" fill="none" stroke="#808080" strokeWidth="1.5" />
      </Box></Slot>
      <Slot><Box>
        <path d="M6 4v14" stroke="#e02020" strokeWidth="3" strokeDasharray="1.5 1" /><path d="M11 4v14" stroke="#e02020" strokeWidth="3" strokeDasharray="1.5 1" /><path d="M16 4v14" stroke="#2040c0" strokeWidth="3" strokeDasharray="1.5 1" /><path d="M21 4v14" stroke="#2040c0" strokeWidth="3" strokeDasharray="1.5 1" />
      </Box></Slot>
      <Slot><Box><path d="M3 16L8 12L13 14L18 9L23 5" fill="none" stroke="#e02020" strokeWidth="1.5" /></Box></Slot>
      <Slot><Box>
        <path d="M6 6v11M13 3v15M20 4v10" stroke="#333" strokeWidth="1" /><rect x="4" y="8" width="4" height="6" fill="#e02020" /><rect x="11" y="9" width="4" height="7" fill="#10a030" /><rect x="18" y="5" width="4" height="6" fill="#e02020" />
      </Box></Slot>
      <Slot>
        <svg width="28" height="24" viewBox="0 0 28 24"><rect x="8" y="2" width="18" height="15" fill="#fff" stroke={blue} strokeWidth="1.5" /><rect x="2" y="6" width="20" height="16" fill="#fff" stroke={blue} strokeWidth="1.5" /><path d="M5 11h14M5 14h14M5 17h14" stroke="#808080" strokeWidth="1.5" /></svg>
      </Slot>
      <Slot><Box><text x="4" y="16" fontSize="13" fill="#2a5cc8" fontFamily="'Liberation Sans',sans-serif">F10</text></Box></Slot>
      <Slot><Box><path d="M6 5h8v3H6zM6 8v9M6 12h4M6 17h4" fill="none" stroke="#e8b020" strokeWidth="1.6" /><rect x="12" y="10" width="9" height="3" fill="#e8b020" /><rect x="12" y="15" width="9" height="3" fill="#e8b020" /></Box></Slot>
      <Slot><Box><text x="6" y="17" fontSize="14" fontWeight="700" fill="#f08030" fontFamily="'Noto Sans CJK SC',sans-serif">自</text></Box></Slot>
      <Slot><Box><text x="4" y="16" fontSize="13" fill="#2a5cc8" fontFamily="'Liberation Sans',sans-serif">F12</text></Box></Slot>
      <Slot>
        <svg width="26" height="22" viewBox="0 0 26 22"><rect x="1" y="1" width="24" height="20" rx="6" fill="#fff" stroke="#308070" strokeWidth="1.6" /><text x="5" y="16" fontSize="12" fontStyle="italic" fill="#2a5cc8" fontFamily="'Liberation Serif',serif">f(x)</text></svg>
      </Slot>
      <Slot><Box><ellipse cx="13" cy="11" rx="6" ry="4.5" fill="none" stroke="#2a5cc8" strokeWidth="2" /></Box></Slot>
    </div>
    <div className="w-[30px] h-px bg-[#a0a0a0] my-[4px]" />
    <div className="flex flex-col items-center">
      <Slot><Box><path d="M3 8l3-2 3 2 3-2 3 2 3-2 4 2" fill="none" stroke="#e02020" strokeWidth="1.3" /><path d="M3 14l3-2 3 2 3-2 3 2 3-2 4 2" fill="none" stroke="#2040c0" strokeWidth="1.3" /></Box></Slot>
      <Slot><span className="text-[14px] font-bold text-[#4a50c8] leading-none">RSI</span></Slot>
      <Slot><span className="text-[22px] font-bold text-[#c83030] leading-none">$</span></Slot>
      <Slot>
        <svg width="24" height="24" viewBox="0 0 24 24"><path d="M12 1L17 7H14V10H17V7L23 12L17 17V14H14V17H17L12 23L7 17H10V14H7V17L1 12L7 7V10H10V7H7Z" fill="#1040c0" /></svg>
      </Slot>
      <Slot>
        <svg width="26" height="24" viewBox="0 0 26 24"><path d="M3 21L6 14L19 3L24 7L10 19Z" fill="#f0a830" stroke="#806020" /><path d="M3 21L6 14L10 19Z" fill="#e0c8a0" /></svg>
      </Slot>
    </div>
    <div className="w-[30px] h-px bg-[#a0a0a0] my-[5px]" />
    <Slot><Box><text x="5" y="16" fontSize="13" fill="#2a5cc8" fontFamily="'Liberation Sans',sans-serif">FS</text></Box></Slot>
    <Slot><Box><rect x="5" y="6" width="12" height="9" fill="#30a050" /><circle cx="18" cy="15" r="3.5" fill="#88c8a0" /></Box></Slot>
    {sideNums.map((n) => (
      <div key={n} className={`h-[34.6px] w-[30px] flex items-center justify-center ${n === "日" ? "bg-white border border-[#a0b8e0]" : ""}`}>{n}</div>
    ))}
  </div>
);

const TopBar = () => (
  <div className="h-[35px] shrink-0 bg-[#f0f0f0] border-b border-b-[#9a9a9a] flex items-center text-[18px] text-[#333] whitespace-nowrap">
    <svg width="26" height="26" viewBox="0 0 26 26" className="ml-[4px] shrink-0">
      <rect width="26" height="26" fill="#d81e1e" />
      <path d="M20 3C12 6 6 11 4 17L11 13L7 24C13 18 20 12 23 5L15 10Z" fill="#f8f0f0" />
    </svg>
    <span className="ml-[5px] w-[127px]">通达信金融终端</span>
    <div className="ml-[46px] flex gap-[36px]">
      {["行情", "市场", "资讯", "数据", "专题", "发现", "交易", "行业", "热点", "L1L2"].map((t) => (
        <span key={t} className="w-[36px]">{t}</span>
      ))}
    </div>
    <span className="ml-[271px] w-[96px] text-[19px] text-[#f02020]">交易未登录</span>
    <span className="ml-[22px] w-[76px] text-[19px] text-[#f02020]">瑞玛精密</span>
    <div className="ml-[238px] flex gap-[22px]">
      {["功能", "版面", "公式", "选项", "帮助"].map((t) => (
        <span key={t} className="w-[36px]">{t}</span>
      ))}
    </div>
    <div className="ml-[19px] h-[34px] border-l border-r border-[#b0b0b0] w-[123px] flex items-center pl-[3px] text-[16px]">
      <span className="w-[81px]">09:21:56</span>
      <span className="text-[18px]">周三</span>
    </div>
    <div className="flex items-center">
      <svg width="158" height="24" viewBox="0 0 158 24" className="shrink-0">
        <path d="M29 5L22 12L29 19" fill="none" stroke="#333" strokeWidth="2.4" />
        <rect x="58" y="11" width="12" height="2.6" fill="#333" />
        <rect x="98" y="5" width="10" height="10" fill="none" stroke="#333" strokeWidth="2.2" />
        <rect x="94" y="9" width="10" height="11" fill="#f0f0f0" stroke="#333" strokeWidth="2.4" />
        <path d="M133 5L145 19M145 5L133 19" stroke="#333" strokeWidth="2.4" />
      </svg>
    </div>
  </div>
);

const periods = ["分时", "1分钟", "5分钟", "15分钟", "30分钟", "60分钟", "日线", "周线", "月线", "多周期"];
const tools = [
  { t: "复权", w: "w-[50px]" },
  { t: "叠加", w: "w-[54px]" },
  { t: "统计", w: "w-[52px]" },
  { t: "画线", w: "w-[53px]" },
  { t: "F10", w: "w-[51px]" },
  { t: "标记", w: "w-[53px]" },
  { t: "-自选", w: "w-[52px]" },
  { t: "返回", w: "w-[55px]" },
];

const ChartToolbar = () => (
  <div className="h-[32px] shrink-0 flex border-b-2 border-b-[#a00000] text-[18px] text-[#c0c0c0] whitespace-nowrap">
    <div className="w-[36px] flex items-center justify-center border-r border-r-[#a00000]">
      <Restore />
    </div>
    <div className="ml-[5px] pt-[3px] flex items-center gap-[13.5px]">
      {periods.map((p) => (
        <span key={p} className={p === "日线" ? "text-[#40e8f0]" : ""}>{p}</span>
      ))}
      <span className="flex items-center gap-[4px]">
        更多
        <svg width="8" height="16" viewBox="0 0 8 16"><path d="M1 1L7 8L1 15" fill="none" stroke="#b0b0b0" strokeWidth="1.2" /></svg>
      </span>
    </div>
    <div className="ml-auto flex">
      {tools.map(({ t, w }) => (
        <div key={t} className={`${w} pt-[3px] flex items-center justify-center border-l border-l-[#a00000] text-[17px]`}>{t}</div>
      ))}
    </div>
  </div>
);

const maLegend = [
  { t: "MA5: 25.41", c: "text-[#e0e0e0]", w: "w-[113px]", up: false },
  { t: "MA10: 26.05", c: "text-[#ffff00]", w: "w-[122px]", up: false },
  { t: "MA20: 25.57", c: "text-[#ff00ff]", w: "w-[123px]", up: true },
  { t: "MA60: 25.46", c: "text-[#00ff00]", w: "w-[124px]", up: true },
  { t: "MA120: 23.59", c: "text-[#c0c0c0]", w: "w-[133px]", up: true },
  { t: "MA250: 22.38", c: "text-[#0000ff]", w: "w-[133px]", up: true },
];

const MainLegend = () => (
  <div className="h-[29px] flex items-center pl-[5px] text-[17px] whitespace-nowrap">
    <span className="w-[119px] text-[18px] text-[#c0c0c0]">瑞玛精密(日线)</span>
    <div className="ml-[10px] mr-[6px]"><Chevron /></div>
    {maLegend.map((m) => (
      <div key={m.t} className={`${m.w} flex items-center gap-[4px] ${m.c}`}>
        {m.t}
        <UpDown up={m.up} />
      </div>
    ))}
    <div className="ml-auto mr-[6px] flex items-center gap-[14px]">
      <svg width="14" height="18" viewBox="0 0 14 18"><path d="M7 1L13 9L7 17L1 9Z" fill="none" stroke="#707070" strokeWidth="1.2" /></svg>
      <Restore />
    </div>
  </div>
);

const prices = ["32.00", "", "30.00", "", "28.00", "", "26.00", "", "24.00", "", "22.00", "", "20.00", "", "18.00", "", "", "", "14.00"];
const subPrices = ["1.50", "1.25", "1.00", "0.75", "0.50", "0.25", "0.00", "-0.25", "-0.50"];

const PriceAxis = () => (
  <div className="w-[76px] border-l-2 border-r-2 border-[#a00000] pt-[5.75px] text-[#d01818] text-[18px]">
    {prices.map((p, i) => (
      <div key={i} className="h-[35.9px] flex items-center justify-between pr-[5px]">
        <span className="w-[7px] h-px bg-[#c01010]" />
        <span className="leading-none">{p}</span>
      </div>
    ))}
  </div>
);

const SubAxis = () => (
  <div className="w-[76px] border-l-2 border-r-2 border-[#a00000] pt-[25.3px] text-[#d01818] text-[18px]">
    {subPrices.map((p) => (
      <div key={p} className="h-[39.4px] flex items-center justify-between pr-[5px]">
        <span className="w-[7px] h-px bg-[#c01010]" />
        <span className="leading-none">{p}</span>
      </div>
    ))}
  </div>
);

const SubLegend = () => (
  <div className="h-[24px] flex items-center pl-[4px] text-[17px] whitespace-nowrap">
    <Chevron size={17} />
    <span className="ml-[6px] w-[80px] text-[17.5px] text-[#c0c0c0]">双金趋势</span>
    <div className="w-[106px] flex items-center gap-[3px] text-[#c8c800]">DIFF: 0.04<UpDown up /></div>
    <div className="w-[68px] flex items-center gap-[3px] text-[#d00000]">: 0.04<UpDown up /></div>
    <div className="w-[125px] flex items-center gap-[3px] text-[#c800c8]">DEA: 0.08<UpDown /></div>
    <span className="w-[125px] text-[#ff00ff]">波浪系数: 0.00</span>
    <span className="text-[#c8c800]">B: 0.00</span>
  </div>
);

const row1 = [
  { t: "指标", w: "w-[46px]" }, { t: "窗口", w: "w-[47px]" }, { t: "MACD", w: "w-[63px]" }, { t: "VOL-TDX", w: "w-[87px]" }, { t: "CCI", w: "w-[43px]" },
  { t: "趋势动力", w: "w-[84px]" }, { t: "主力监控", w: "w-[85px]" }, { t: "私募主图", w: "w-[83px]" }, { t: "MA2", w: "w-[47px]" }, { t: "测试主图", w: "w-[85px]" },
  { t: "测试幅图A", w: "w-[93px]" }, { t: "测试幅图B", w: "w-[96px]" }, { t: "更多", w: "w-[48px]" }, { t: "设置", w: "w-[48px]", c: "text-[#40e8f0]" },
];
const row2 = [
  { t: "扩展∧", w: "w-[61px]" }, { t: "关联报价", w: "w-[84px]" }, { t: "资金分布", w: "w-[84px]" }, { t: "综合资讯", w: "w-[85px]", c: "text-[#c8c800]" },
  { t: "行业资讯", w: "w-[83px]", c: "text-[#c8c800]" }, { t: "互动问答", w: "w-[84px]", c: "text-[#c8c800]" }, { t: "新用户福利专享", w: "w-[138px]" },
];

const DateAxis = () => (
  <div className="h-[24px] shrink-0 flex border-t-2 border-t-[#a00000] border-r-2 border-r-[#a00000] text-[17px] text-[#e02020] bg-[linear-gradient(90deg,#a00000_2px,transparent_2px)] bg-[length:52px_4px] bg-repeat-x whitespace-nowrap">
    <div className="w-[265px] pl-[5px] border-r border-r-[#a00000]">2022年</div>
    <div className="w-[177px] pl-[2px] border-r border-r-[#a00000]">4</div>
    <div className="w-[178px] pl-[2px] border-r border-r-[#a00000]">5</div>
    <div className="w-[197px] pl-[2px] border-r border-r-[#a00000]">6</div>
    <div className="w-[86px] pl-[2px]">7</div>
    <div className="relative z-10 w-[116px] bg-[#000080] text-[#c0c0c0] text-center text-[16px] leading-[22px]">2022/07/14/四</div>
    <div className="-ml-[7px]">8</div>
  </div>
);

const ToolRow = ({ items }: { items: { t: string; w: string; c?: string }[] }) => (
  <div className="h-[26.5px] shrink-0 flex border-t-2 border-t-[#a00000] border-r-2 border-r-[#a00000] text-[17px] text-[#c0c0c0] whitespace-nowrap">
    {items.map((it) => (
      <div key={it.t} className={`${it.w} flex items-center justify-center border-r border-r-[#a00000] ${it.c || ""}`}>{it.t}</div>
    ))}
  </div>
);

const quoteLeft = ["卖五", "卖四", "卖三", "卖二", "卖一"];
const mono = "font-['DejaVu_Sans','Noto_Sans_CJK_SC',sans-serif] font-bold text-[16.5px]";

// the 万 / 亿 unit is drawn thin and large next to the bold digits
const Val = ({ v }: { v?: string }) => {
  if (!v) return null;
  const last = v.slice(-1);
  if (last === "万" || last === "亿")
    return (
      <>
        {v.slice(0, -1)}
        <span className="font-normal text-[21px]">{last}</span>
      </>
    );
  return <>{v}</>;
};

const BookRow = ({ label, price, vol, extra }: { label: string; price?: string; vol?: string; extra?: string }) => (
  <div className="h-[26.2px] flex items-center pl-[4px] text-[23px] text-[#c0c0c0] leading-none whitespace-nowrap">
    <span className="w-[80px]">
      {label}
      {extra && <span className="ml-[4px] text-[20px]">{extra}</span>}
    </span>
    <span className={`w-[80px] text-right text-[#e0e0e0] ${mono}`}>{price}</span>
    <span className={`w-[102px] text-right text-[#c8c800] ${mono}`}><Val v={vol} /></span>
  </div>
);

const InfoRow = ({ a, v, vc = "text-[#e0e0e0]", b, u, uc = "text-[#e0e0e0]", big }: { a: React.ReactNode; v?: string; vc?: string; b: React.ReactNode; u: string; uc?: string; big?: boolean }) => (
  <div className="h-[28.7px] flex items-center pl-[4px] text-[23px] text-[#c0c0c0] leading-none whitespace-nowrap">
    <span className="w-[80px]">{a}</span>
    <span className={`w-[80px] text-right ${mono} ${vc}`}>{v}</span>
    <span className="ml-[8px] w-[64px]">{b}</span>
    <span className={`w-[95px] text-right ${mono} ${big ? "text-[#c0c0c0]" : uc}`}><Val v={u} /></span>
  </div>
);

const QuotePanel = () => (
  <div className="w-[336px] h-full flex flex-col bg-black">
    <div className="h-[42px] shrink-0 flex items-center pl-[54px] pt-[2px] whitespace-nowrap">
      <span className="text-[28.5px] font-bold text-[#10d8e8] leading-none">瑞玛精密</span>
      <span className="ml-[9px] mt-[6px] text-[18px] text-[#a8a8a8] font-['DejaVu_Sans_Mono',monospace] font-bold tracking-[0.6px]">002976</span>
    </div>
    <div className="h-[45px] shrink-0 flex items-center pl-[5px] border-b-2 border-b-[#a00000] text-white font-['DejaVu_Sans',sans-serif] font-bold text-[23px]">
      <span className="w-[137px]">26.00</span>
      <span className="w-[111px]">0.00</span>
      <span>0.00%</span>
    </div>
    <div className="pt-px">
      {quoteLeft.map((l, i) => (
        <BookRow key={l} label={l} extra={i === 0 ? "￥" : undefined} price={i === 4 ? "26.00" : undefined} vol={i === 3 ? "1.6万" : i === 4 ? "8.6万" : undefined} />
      ))}
    </div>
    <div className="h-[2px] flex shrink-0">
      <div className="w-[152px] bg-[#b08030]" />
      <div className="flex-1 bg-[#2f7fc0]" />
    </div>
    <div className="h-[139px] shrink-0 border-b-2 border-b-[#a00000]">
      <div className="flex flex-col gap-[0.8px]">
        <BookRow label="买一" price="26.00" vol="8.6万" />
        <BookRow label="买二" />
        <BookRow label="买三" />
        <BookRow label="买四" />
        <BookRow label="买五" />
      </div>
    </div>
    <div className="h-[146px] shrink-0 pt-[2px] border-b-2 border-b-[#a00000]">
      <InfoRow a="今开" b="均价" u="26.00" />
      <InfoRow a="最高" b="量比" u="0.43" uc="text-[#00e000]" />
      <InfoRow a="最低" b="市值" u="31.2亿" big />
      <InfoRow a="现量" v="0" vc="text-[#f03030]" b="总量" u="0" big />
      <InfoRow a="外盘" v="0" vc="text-[#f03030]" b="内盘" u="0" uc="text-[#00e000]" />
    </div>
    <div className="h-[93px] shrink-0 pt-px border-b-2 border-b-[#a00000]">
      <InfoRow a="换手" v="0.00%" vc="text-[#c0c0c0]" b="股本" u="1.20亿" big />
      <InfoRow a="净资" v="7.12" vc="text-[#c0c0c0]" b="流通" u="3527万" big />
      <InfoRow a={<>收益<span className="text-[13px]">(三)</span></>} v="0.510" vc="text-[#c0c0c0]" b={<span className="text-[20px]">PE(动)</span>} u="38.3" big />
    </div>
  </div>
);

const StatusBar = () => (
  <div className="h-[35px] shrink-0 bg-[#f0f0f0] flex items-center pl-[2px] text-[21px] text-[#222] whitespace-nowrap">
    <span className="w-[20px] h-[19px] rounded-[2px] bg-[#f0b040] border border-[#c88020] flex items-center justify-center">
      <span className="w-[10px] h-[8px] bg-[#ffe080]" />
    </span>
    <span className="ml-[3px] w-[54px] text-[24px]">上证</span>
    <span className="w-[108px]">3134.08</span>
    <span className="w-[69px]">0.00</span>
    <span className="w-[103px]">0.00%</span>
    <span className="w-[76px]">0</span>
    <span className="w-[55px] text-[24px]">沪深</span>
    <span className="w-[108px]">3865.97</span>
    <span className="w-[69px]">0.00</span>
    <span className="w-[103px]">0.00%</span>
    <span className="w-[79px]">0</span>
    <span className="w-[53px] text-[24px]">创业</span>
    <span className="w-[109px]">2431.73</span>
    <span>0.00</span>
  </div>
);

const Ime = () => (
  <div className="absolute left-[1282px] top-[903px] w-[157px] h-[25px] bg-[#c0c0c0] border-t border-l border-t-white border-l-white border-b-2 border-r-2 border-b-[#505050] border-r-[#505050] flex items-center px-[2px] text-[16px] text-black whitespace-nowrap">
    <span className="w-[20px] h-[20px] flex items-center justify-center font-['Liberation_Serif',serif] font-bold text-[19px] text-[#900000] border-r border-r-[#606060]">A</span>
    <span className="w-[72px] text-center border-r border-r-[#606060] h-[20px] leading-[20px]">极品五笔</span>
    <svg width="20" height="20" viewBox="0 0 20 20" className="border-r border-r-[#606060]"><path d="M12 3C8 6 8 12 11 14C9 16 6 16 4 15C8 19 15 16 15 10C15 7 14 5 12 3Z" fill="#000" /></svg>
    <span className="w-[20px] h-[20px] text-center leading-[14px] border-r border-r-[#606060]">·,</span>
    <svg width="20" height="18" viewBox="0 0 20 18"><rect x="1" y="2" width="18" height="14" fill="#a0a0a0" stroke="#606060" /><path d="M3 6h14M3 9h14M3 12h14" stroke="#f0f0f0" strokeDasharray="2 1" /></svg>
  </div>
);

const Watermark = () => (
  <div className="absolute left-[1080px] top-[1287px] w-[1080px] h-[108px] bg-[#7faddb] flex items-center overflow-hidden">
    <span className="ml-[20px] w-[400px] text-[75px] leading-none font-black text-[#1a0a8c] font-['Noto_Sans_CJK_SC',sans-serif] whitespace-nowrap">公式指标网</span>
    <svg width="114" height="108" viewBox="0 0 114 109" className="ml-[10px] shrink-0">
      <path d="M5 52A52 52 0 0 1 109 52H97A40 42 0 0 0 17 52Z" fill="#d9634c" />
      <path d="M109 57A52 50 0 0 1 57 107V95A40 38 0 0 0 97 57Z" fill="#e9c94a" />
      <path d="M5 57A52 50 0 0 0 50 107V95A40 38 0 0 1 17 57Z" fill="#6c9cd0" />
      <path d="M52 3H62L66 22H78V50H68V56H82V78H70L64 106H50L46 78H32V56H46V50H36V22H48Z" fill="#e9c94a" />
      <circle cx="57" cy="10" r="3" fill="#7faddb" />
      <path d="M44 34H70M44 44H70M57 26V50M40 64H74M40 72H74M57 58V78" stroke="#8aa0b8" strokeWidth="2" fill="none" />
      <text x="0" y="0" fontSize="9" fill="#fff" fontFamily="'Liberation Sans',sans-serif" transform="translate(8 60) rotate(66)">www.9m8.cn</text>
    </svg>
    <span className="ml-[37px] text-[66px] leading-none font-bold text-white font-['DejaVu_Serif',serif] whitespace-nowrap">www.9m8.cn</span>
  </div>
);

export default function App() {
  return (
    <div className="relative w-[2160px] h-[1395px] bg-black flex flex-col overflow-hidden font-['Liberation_Sans','Noto_Sans_CJK_SC',sans-serif]">
      <TopBar />
      <div className="h-[1325px] shrink-0 flex">
        <div className="w-[1787px] h-full flex flex-col">
          <ChartToolbar />
          <div className="h-[714px] shrink-0 flex border-b-2 border-b-[#a00000]">
            <div className="w-[1711px]">
              <MainLegend />
              <PriceChart />
            </div>
            <PriceAxis />
          </div>
          <div className="h-[500px] shrink-0 flex">
            <div className="w-[1711px]">
              <SubLegend />
              <IndicatorChart />
            </div>
            <SubAxis />
          </div>
          <DateAxis />
          <ToolRow items={row1} />
          <ToolRow items={row2} />
          <div className="flex-1 border-t-2 border-t-[#a00000]" />
        </div>
        <div className="w-[336px]">
          <QuotePanel />
        </div>
        <SideBar />
      </div>
      <StatusBar />
      <div className="absolute left-[1713px] top-[659px] w-[72px] h-[23px] bg-[#000080] text-[#d0d0d0] text-[18px] leading-[23px] pl-[1px]">15.50</div>
      <Ime />
      <Watermark />
    </div>
  );
}
